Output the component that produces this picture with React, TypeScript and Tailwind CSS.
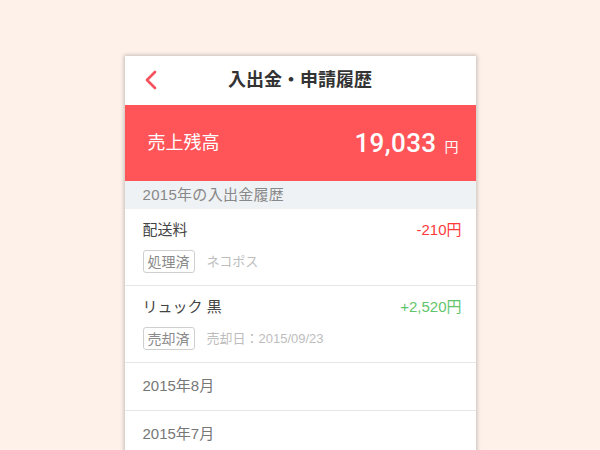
import React from "react";

const font = { fontFamily: '"Liberation Sans", "Noto Sans CJK JP", sans-serif' };

function Tag({ label }: { label: string }) {
  return (
    <span className="inline-flex h-[23px] items-center rounded-[3px] border border-[#cfcfcf] px-[4px] text-[14px] leading-none text-[#8a8a8a]">
      {label}
    </span>
  );
}

function Row({
  title,
  amount,
  amountClass,
  tag,
  note,
}: {
  title: string;
  amount: string;
  amountClass: string;
  tag: string;
  note: string;
}) {
  return (
    <div className="flex flex-col border-b border-[#e6e6e6] pl-[18px] pr-[14px] pt-[11px] pb-[12px]">
      <div className="flex h-[20px] items-center justify-between">
        <span className="text-[15px] text-[#444]">{title}</span>
        <span className={`text-[15px] ${amountClass}`}>{amount}</span>
      </div>
      <div className="mt-[10px] flex items-center gap-[12px]">
        <Tag label={tag} />
        <span className="text-[13px] text-[#bdbdbd]">{note}</span>
      </div>
    </div>
  );
}

export default function App() {
  return (
    <div
      className="flex h-[450px] w-full justify-center overflow-hidden bg-[#fdf1ea] pt-[56px]"
      style={font}
    >
      <div className="flex h-[420px] w-[351px] flex-col bg-white shadow-[0_0_4px_1px_rgba(0,0,0,0.22)]">
        <div className="relative flex h-[49px] items-center justify-center">
          <svg
            className="absolute left-[19px] top-[14px]"
            width="14"
            height="20"
            viewBox="0 0 14 20"
            fill="none"
          >
            <path
              d="M11 2 L3 10 L11 18"
              stroke="#f5525c"
              strokeWidth="2.6"
              strokeLinecap="round"
              strokeLinejoin="round"
            />
          </svg>
          <span className="text-[18px] font-bold text-[#333]">入出金・申請履歴</span>
        </div>
        <div className="flex h-[76px] items-center justify-between bg-[#ff5458] pl-[23px] pr-[17px] text-white">
          <span className="text-[18px]">売上残高</span>
          <span className="flex items-baseline">
            <span className="font-['Roboto',sans-serif] text-[26px] font-medium tracking-[0.4px]">19,033</span>
            <span className="ml-[8px] text-[14px]">円</span>
          </span>
        </div>
        <div className="flex h-[28px] items-center bg-[#eff2f5] pl-[18px] text-[15px] tracking-[0.3px] text-[#888]">
          2015年の入出金履歴
        </div>
        <Row
          title="配送料"
          amount="-210円"
          amountClass="text-[#ff3a3a]"
          tag="処理済"
          note="ネコポス"
        />
        <Row
          title="リュック 黒"
          amount="+2,520円"
          amountClass="text-[#62c46c]"
          tag="売却済"
          note="売却日：2015/09/23"
        />
        <div className="flex h-[48px] items-center border-b border-[#e6e6e6] pl-[18px] text-[15px] text-[#777]">
          2015年8月
        </div>
        <div className="flex h-[48px] items-center border-b border-[#e6e6e6] pl-[18px] text-[15px] text-[#777]">
          2015年7月
        </div>
      </div>
    </div>
  );
}
